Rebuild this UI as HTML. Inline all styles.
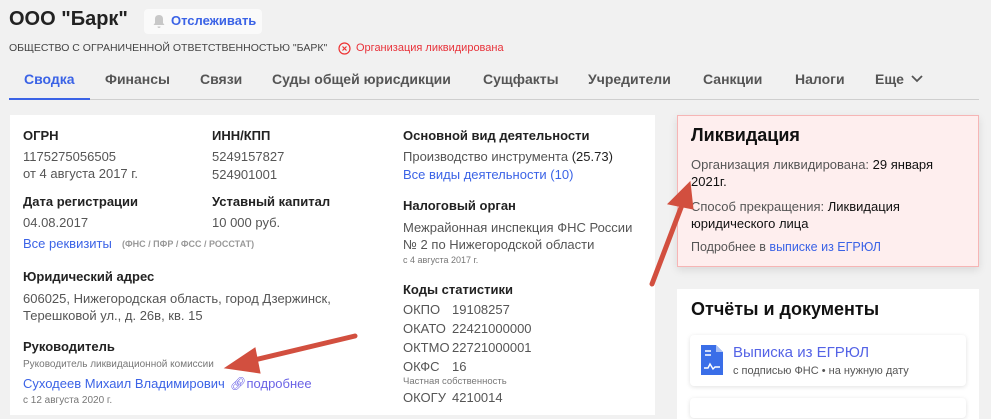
<!DOCTYPE html>
<html><head><meta charset="utf-8"><style>
*{margin:0;padding:0;box-sizing:border-box}
body{width:991px;height:407px;overflow:hidden;background:#f1f1f1;font-family:"Liberation Sans",sans-serif;color:#222;position:relative}
.a{position:absolute;white-space:nowrap}
.h{font-weight:bold;font-size:13px;color:#222}
.t{font-size:13px;color:#555}
.s{font-size:10px;color:#777}
.l{color:#3b63e6}
.tab{font-size:14px;font-weight:bold;color:#555;top:71px}
</style></head><body>
<div class="a" style="left:9px;top:8px;font-size:20px;font-weight:bold;color:#222">ООО "Барк"</div>
<div class="a" style="left:144px;top:9px;width:118px;height:25px;background:#fafafa;border-radius:4px"></div>
<svg class="a" style="left:152px;top:14px" width="14" height="15" viewBox="0 0 14 15"><path d="M7 1c-3 0-4 2-4 4v4l-1.5 2h11L11 9V5c0-2-1-4-4-4z M5.5 12.5a1.5 1.5 0 0 0 3 0z" fill="#c8c8c8"/></svg>
<div class="a" style="left:171px;top:13px;font-size:13px;font-weight:bold;color:#3b63e6">Отслеживать</div>
<div class="a" style="left:9px;top:42px;font-size:10.5px;color:#444">ОБЩЕСТВО С ОГРАНИЧЕННОЙ ОТВЕТСТВЕННОСТЬЮ "БАРК"</div>
<svg class="a" style="left:338px;top:42px" width="13" height="13"><circle cx="6.5" cy="6.5" r="5.5" fill="none" stroke="#e33" stroke-width="1.2"/><path d="M4.5 4.5l4 4M8.5 4.5l-4 4" stroke="#e33" stroke-width="1.2"/></svg>
<div class="a" style="left:356px;top:42px;font-size:11px;color:#e8323a">Организация ликвидирована</div>
<div class="a tab" style="left:24px;color:#3b63e6">Сводка</div>
<div class="a tab" style="left:105px">Финансы</div>
<div class="a tab" style="left:200px">Связи</div>
<div class="a tab" style="left:272px">Суды общей юрисдикции</div>
<div class="a tab" style="left:483px">Сущфакты</div>
<div class="a tab" style="left:588px">Учредители</div>
<div class="a tab" style="left:703px">Санкции</div>
<div class="a tab" style="left:795px">Налоги</div>
<div class="a tab" style="left:875px">Еще</div>
<svg class="a" style="left:911px;top:75px" width="12" height="8"><path d="M1 1l5 5 5-5" fill="none" stroke="#555" stroke-width="1.8"/></svg>
<div class="a" style="left:9px;top:99px;width:970px;height:1px;background:#cfcfcf"></div>
<div class="a" style="left:9px;top:98px;width:81px;height:2px;background:#3b63e6"></div>

<div class="a" style="left:10px;top:115px;width:645px;height:300px;background:#fff"></div>
<div class="a h" style="left:23px;top:128px">ОГРН</div>
<div class="a t" style="left:23px;top:149px">1175275056505</div>
<div class="a t" style="left:23px;top:166px">от 4 августа 2017 г.</div>
<div class="a h" style="left:212px;top:128px">ИНН/КПП</div>
<div class="a t" style="left:212px;top:149px">5249157827</div>
<div class="a t" style="left:212px;top:167px">524901001</div>
<div class="a h" style="left:23px;top:194px">Дата регистрации</div>
<div class="a t" style="left:23px;top:215px">04.08.2017</div>
<div class="a h" style="left:212px;top:194px">Уставный капитал</div>
<div class="a t" style="left:212px;top:215px">10 000 руб.</div>
<div class="a t l" style="left:23px;top:236px">Все реквизиты</div>
<div class="a" style="left:122px;top:239px;font-size:9px;color:#999;font-weight:bold">(ФНС / ПФР / ФСС / РОССТАТ)</div>
<div class="a h" style="left:23px;top:269px">Юридический адрес</div>
<div class="a t" style="left:23px;top:291px">606025, Нижегородская область, город Дзержинск,</div>
<div class="a t" style="left:23px;top:308px">Терешковой ул., д. 26в, кв. 15</div>
<div class="a h" style="left:23px;top:339px">Руководитель</div>
<div class="a s" style="left:23px;top:359px">Руководитель ликвидационной комиссии</div>
<div class="a t l" style="left:23px;top:376px">Суходеев Михаил Владимирович</div>
<div class="a t" style="left:230px;top:376px;color:#6b63e6">🔗︎подробнее</div>
<div class="a s" style="left:23px;top:395px">с 12 августа 2020 г.</div>

<div class="a h" style="left:403px;top:128px">Основной вид деятельности</div>
<div class="a t" style="left:403px;top:149px">Производство инструмента <span style="color:#222">(25.73)</span></div>
<div class="a t l" style="left:403px;top:167px">Все виды деятельности (10)</div>
<div class="a h" style="left:403px;top:198px">Налоговый орган</div>
<div class="a t" style="left:403px;top:220px">Межрайонная инспекция ФНС России</div>
<div class="a t" style="left:403px;top:237px">№ 2 по Нижегородской области</div>
<div class="a s" style="left:403px;top:255px;font-size:9px">с 4 августа 2017 г.</div>
<div class="a h" style="left:403px;top:282px">Коды статистики</div>
<div class="a t" style="left:403px;top:302px">ОКПО</div><div class="a t" style="left:452px;top:302px">19108257</div>
<div class="a t" style="left:403px;top:321px">ОКАТО</div><div class="a t" style="left:452px;top:321px">22421000000</div>
<div class="a t" style="left:403px;top:340px">ОКТМО</div><div class="a t" style="left:452px;top:340px">22721000001</div>
<div class="a t" style="left:403px;top:359px">ОКФС</div><div class="a t" style="left:452px;top:359px">16</div>
<div class="a s" style="left:403px;top:376px;font-size:9.5px">Частная собственность</div>
<div class="a t" style="left:403px;top:390px">ОКОГУ</div><div class="a t" style="left:452px;top:390px">4210014</div>

<div class="a" style="left:677px;top:115px;width:302px;height:152px;background:#feeeee;border:1px solid #f6b5b5;box-shadow:0 3px 8px rgba(0,0,0,.1)"></div>
<div class="a" style="left:691px;top:125px;font-size:18px;font-weight:bold;color:#111">Ликвидация</div>
<div class="a t" style="left:691px;top:157px">Организация ликвидирована: <span style="color:#111">29 января</span></div>
<div class="a t" style="left:691px;top:174px;color:#111">2021г.</div>
<div class="a t" style="left:691px;top:199px">Способ прекращения: <span style="color:#111">Ликвидация</span></div>
<div class="a t" style="left:691px;top:216px;color:#111">юридического лица</div>
<div class="a t" style="left:691px;top:240px;font-size:12.5px">Подробнее в <span class="l">выписке из ЕГРЮЛ</span></div>

<div class="a" style="left:677px;top:289px;width:302px;height:130px;background:#fff"></div>
<div class="a" style="left:691px;top:299px;font-size:18px;font-weight:bold;color:#111">Отчёты и документы</div>
<div class="a" style="left:690px;top:335px;width:276px;height:51px;background:#fff;border-radius:4px;box-shadow:0 1px 5px rgba(0,0,0,.12)"></div>
<div class="a" style="left:690px;top:398px;width:276px;height:20px;background:#fff;border-radius:4px;box-shadow:0 1px 5px rgba(0,0,0,.12)"></div>
<svg class="a" style="left:701px;top:345px" width="22" height="30" viewBox="0 0 22 30"><path d="M0 0h15l7 7v23H0z" fill="#3a6ee8"/><path d="M15 0v7h7" fill="#a9c0f5"/><path d="M4 6h6M4 10h6" stroke="#fff" stroke-width="1.5"/><path d="M3 23h4l2-4 3 5 2-2h5" stroke="#fff" stroke-width="1.4" fill="none"/></svg>
<div class="a" style="left:733px;top:344px;font-size:15px;color:#5463e6">Выписка из ЕГРЮЛ</div>
<div class="a" style="left:733px;top:365px;font-size:11px;color:#555">с подписью ФНС • на нужную дату</div>

<svg class="a" style="left:0;top:0" width="991" height="407"><g fill="#d24f3f" stroke="#d24f3f"><line x1="355" y1="336" x2="250" y2="361" stroke-width="5" stroke-linecap="round"/><polygon points="225,368 255,348 260,373" stroke-width="1"/><line x1="652" y1="284" x2="682" y2="205" stroke-width="5" stroke-linecap="round"/><polygon points="690,182 668,204 693,209" stroke-width="1"/></g></svg>
</body></html>
